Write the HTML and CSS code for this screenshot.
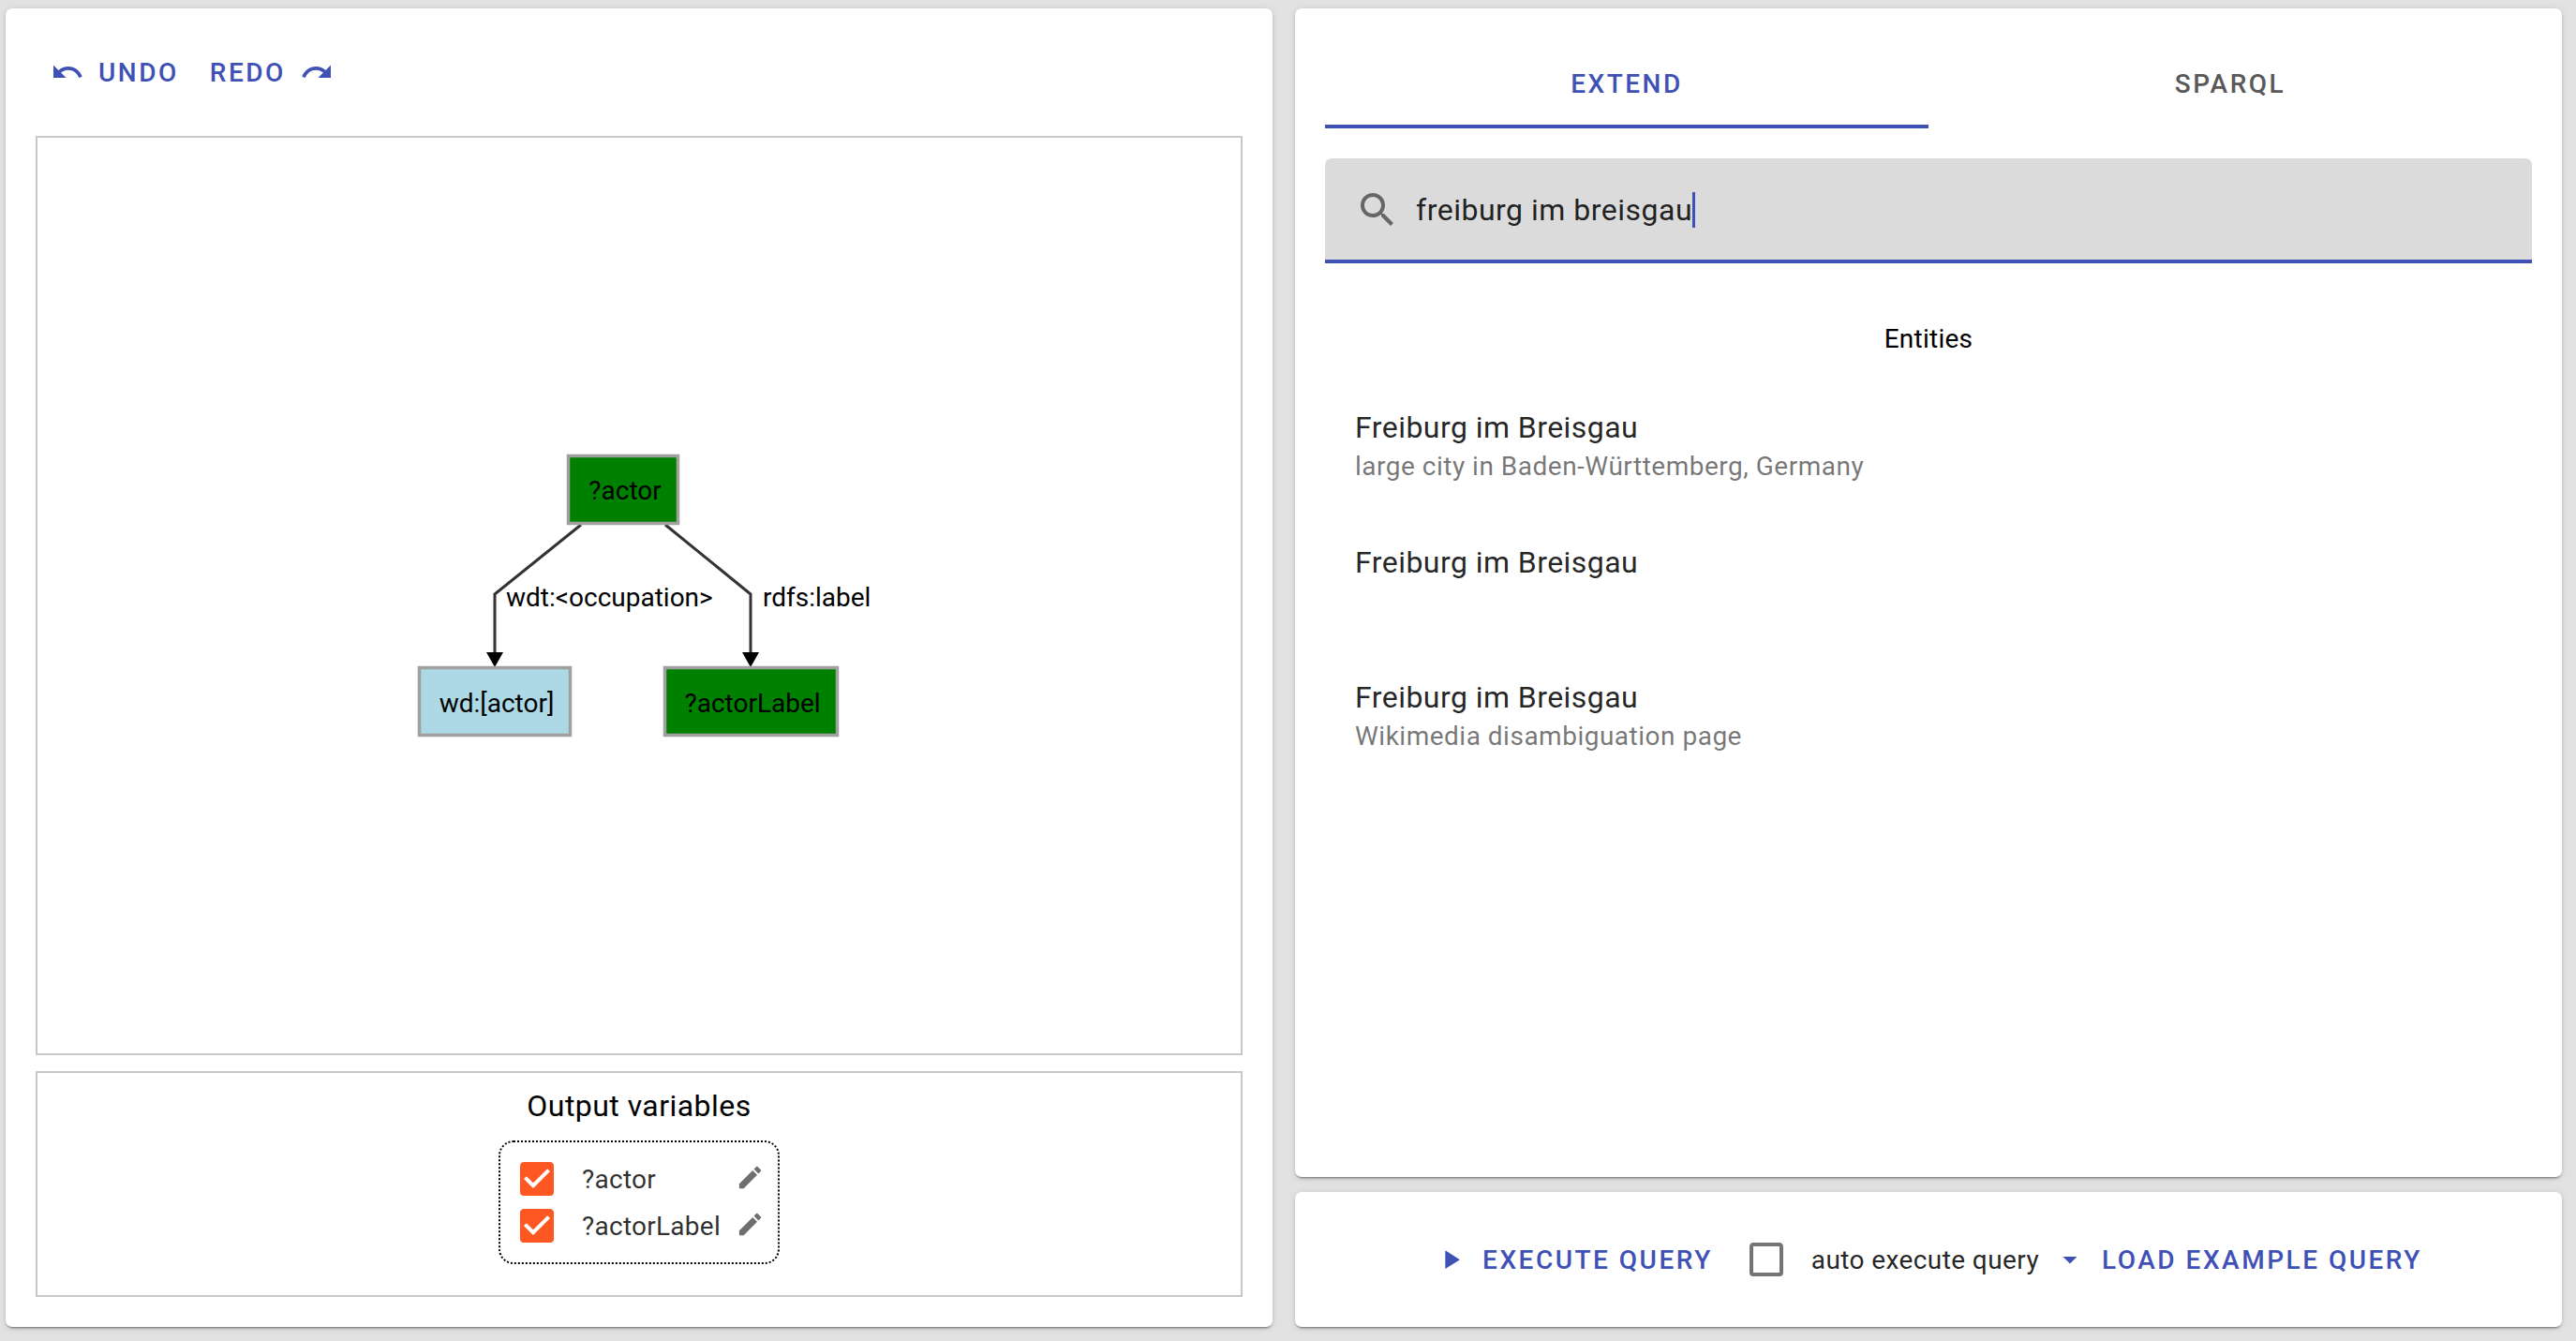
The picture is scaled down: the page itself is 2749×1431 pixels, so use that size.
FILE: index.html
```html
<!DOCTYPE html>
<html lang="en">
<head>
<meta charset="utf-8">
<title>Query builder</title>
<link rel="stylesheet" href="styles.css">
</head>
<body>
<main class="app">
  <section class="card left">
    <div class="history">
      <button class="btn btn-undo"><svg class="ic36" viewBox="0 0 24 24"><path d="M12.5,8C9.85,8 7.45,9 5.6,10.6L2,7V16H11L7.38,12.38C8.77,11.22 10.54,10.5 12.5,10.5C16.04,10.5 19.05,12.81 20.1,16L22.47,15.22C21.08,11.03 17.15,8 12.5,8Z"/></svg>UNDO</button>
      <button class="btn btn-redo"><span>REDO</span><svg class="ic36" viewBox="0 0 24 24"><path d="M18.4,10.6C16.55,9 14.15,8 11.5,8C6.85,8 2.92,11.03 1.54,15.22L3.9,16C4.95,12.81 7.95,10.5 11.5,10.5C13.45,10.5 15.24,11.22 16.63,12.38L13,16H22V7L18.4,10.6Z"/></svg></button>
    </div>
    <div class="graph">
      <svg class="graph-svg" viewBox="40 147 1284 977" preserveAspectRatio="xMinYMin meet">
        <path class="edge" d="M620 560 L528 634 V700"/>
        <path class="edge" d="M710 560 L801 634 V700"/>
        <path class="head" d="M519 696 H537 L528 712 Z"/>
        <path class="head" d="M792 696 H810 L801 712 Z"/>
        <rect class="node var" x="606.5" y="486.5" width="117" height="72"/>
        <rect class="node res" x="447.5" y="712.5" width="161" height="72"/>
        <rect class="node var" x="709.5" y="712.5" width="184" height="72"/>
        <text class="t" x="667" y="533" text-anchor="middle">?actor</text>
        <text class="t" x="530" y="760" text-anchor="middle">wd:[actor]</text>
        <text class="t" x="803" y="760" text-anchor="middle">?actorLabel</text>
        <text class="t" x="540" y="647">wdt:&lt;occupation&gt;</text>
        <text class="t" x="814" y="647">rdfs:label</text>
      </svg>
    </div>
    <div class="output">
      <h2 class="output-title">Output variables</h2>
      <div class="vars">
        <svg class="ic48 orange" viewBox="0 0 24 24"><path d="M10,17L5,12L6.41,10.59L10,14.17L17.59,6.58L19,8M19,3H5C3.89,3 3,3.89 3,5V19A2,2 0 0,0 5,21H19A2,2 0 0,0 21,19V5C21,3.89 20.1,3 19,3Z"/></svg>
        <span class="var-name">?actor</span>
        <svg class="pencil" viewBox="0 0 24 24"><path d="M3 17.25V21h3.75L17.81 9.94l-3.75-3.75L3 17.25zM20.71 7.04c.39-.39.39-1.02 0-1.41l-2.34-2.34c-.39-.39-1.02-.39-1.41 0l-1.83 1.83 3.75 3.75 1.83-1.83z"/></svg>
        <svg class="ic48 orange" viewBox="0 0 24 24"><path d="M10,17L5,12L6.41,10.59L10,14.17L17.59,6.58L19,8M19,3H5C3.89,3 3,3.89 3,5V19A2,2 0 0,0 5,21H19A2,2 0 0,0 21,19V5C21,3.89 20.1,3 19,3Z"/></svg>
        <span class="var-name">?actorLabel</span>
        <svg class="pencil" viewBox="0 0 24 24"><path d="M3 17.25V21h3.75L17.81 9.94l-3.75-3.75L3 17.25zM20.71 7.04c.39-.39.39-1.02 0-1.41l-2.34-2.34c-.39-.39-1.02-.39-1.41 0l-1.83 1.83 3.75 3.75 1.83-1.83z"/></svg>
      </div>
    </div>
  </section>
  <div class="right">
    <section class="card panel">
      <div class="tabs">
        <div class="tab active">EXTEND</div>
        <div class="tab">SPARQL</div>
      </div>
      <div class="field">
        <svg class="ic48 grey" viewBox="0 0 24 24"><path d="M9.5,3A6.5,6.5 0 0,1 16,9.5C16,11.11 15.41,12.59 14.44,13.73L14.71,14H15.5L20.5,19L19,20.5L14,15.5V14.71L13.73,14.44C12.59,15.41 11.11,16 9.5,16A6.5,6.5 0 0,1 3,9.5A6.5,6.5 0 0,1 9.5,3M9.5,5C7,5 5,7 5,9.5C5,12 7,14 9.5,14C12,14 14,12 14,9.5C14,7 12,5 9.5,5Z"/></svg>
        <span class="query">freiburg im breisgau</span><span class="caret"></span>
      </div>
      <h3 class="entities">Entities</h3>
      <ul class="results">
        <li class="result"><div class="r-title">Freiburg im Breisgau</div><div class="r-sub">large city in Baden-Württemberg, Germany</div></li>
        <li class="result"><div class="r-title">Freiburg im Breisgau</div></li>
        <li class="result"><div class="r-title">Freiburg im Breisgau</div><div class="r-sub">Wikimedia disambiguation page</div></li>
      </ul>
    </section>
    <section class="card actions">
      <button class="btn btn-run"><svg class="play" viewBox="0 0 24 24"><path d="M8,5.14V19.14L19,12.14L8,5.14Z"/></svg>EXECUTE QUERY</button>
      <label class="auto"><svg class="ic48 check-grey" viewBox="0 0 24 24"><path d="M19,3H5C3.89,3 3,3.89 3,5V19A2,2 0 0,0 5,21H19A2,2 0 0,0 21,19V5C21,3.89 20.1,3 19,3M19,5V19H5V5H19Z"/></svg><span class="auto-label">auto execute query</span></label>
      <button class="btn btn-load"><svg class="ic36" viewBox="0 0 24 24"><path d="M7,10L12,15L17,10H7Z"/></svg>LOAD EXAMPLE QUERY</button>
    </section>
  </div>
</main>
</body>
</html>
```
FILE: styles.css
```css
* { box-sizing: border-box; }
html, body { margin: 0; height: 100%; }
body {
  background: #e2e2e2;
  font-family: Roboto, "Noto Sans", sans-serif;
  color: rgba(0, 0, 0, .87);
}
.app {
  display: grid;
  grid-template-columns: 1352px 1352px;
  column-gap: 24px;
  height: 1431px;
  padding: 9px 15px 15px 6px;
}
.card {
  background: #fff;
  border-radius: 7px;
  box-shadow: 0 3px 2px -2px rgba(0, 0, 0, .35), 0 2px 3px rgba(0, 0, 0, .14), 0 1px 8px rgba(0, 0, 0, .1);
}
.left {
  display: flex;
  flex-direction: column;
  padding: 0 32px 32px;
}
.history {
  display: flex;
  align-items: center;
  height: 136px;
  flex: none;
  padding-left: 16px;
  gap: 33px;
}
.btn {
  display: inline-flex;
  align-items: center;
  gap: 17px;
  padding: 0;
  border: 0;
  background: none;
  color: #3f51b5;
  font-family: inherit;
  font-size: 28px;
  font-weight: 500;
  letter-spacing: 2.5px;
  white-space: nowrap;
}
.btn svg { fill: currentColor; flex: none; }
.btn-undo { gap: 15px; }
.btn-redo { gap: 15px; }
.btn-run { gap: 17px; }
.btn-load { gap: 16px; }
.ic36 { width: 36px; height: 36px; }
.ic48 { width: 48px; height: 48px; flex: none; }
.play { width: 34px; height: 34px; }
.orange { fill: #ff5722; }
.grey { fill: #666; }
.check-grey { fill: #757575; }
.graph {
  flex: 1;
  min-height: 0;
  border: 2px solid #c8c8c8;
}
.graph-svg { display: block; width: 100%; height: 100%; }
.edge { fill: none; stroke: #333; stroke-width: 3; }
.head { fill: #000; }
.node { stroke: #a0a0a0; stroke-width: 3.5; }
.var { fill: #008000; }
.res { fill: #add8e6; }
.t { font-family: Roboto, sans-serif; font-size: 28px; fill: #000; }
.output {
  flex: none;
  height: 241px;
  margin-top: 17px;
  border: 2px solid #c8c8c8;
  display: flex;
  flex-direction: column;
  align-items: center;
  padding-top: 15px;
}
.output-title {
  margin: 0;
  font-size: 32px;
  letter-spacing: .45px;
  font-weight: 400;
  line-height: 40px;
  color: #000;
}
.vars {
  margin-top: 17px;
  display: grid;
  grid-template-columns: 48px auto 31px;
  grid-auto-rows: 50px;
  align-items: center;
  padding: 14px 14px 14px 15px;
  border: 2px dotted #000;
  border-radius: 16px;
}
.var-name {
  font-size: 28px;
  letter-spacing: .25px;
  padding: 0 16px 0 24px;
  color: rgba(0, 0, 0, .82);
}
.pencil { width: 31px; height: 31px; fill: #6e6e6e; margin-top: -4px; }
.right {
  display: flex;
  flex-direction: column;
  gap: 16px;
  min-height: 0;
}
.panel {
  flex: 1;
  padding: 34px 32px 0;
  min-height: 0;
}
.tabs { display: grid; grid-template-columns: 1fr 1fr; }
.tab {
  height: 94px;
  padding-top: 3px;
  border-bottom: 4px solid transparent;
  display: flex;
  align-items: center;
  justify-content: center;
  font-size: 28px;
  font-weight: 500;
  letter-spacing: 2.5px;
  color: #595959;
}
.tab.active { color: #3f51b5; border-bottom-color: #3f51b5; }
.field {
  margin-top: 32px;
  height: 112px;
  padding: 2px 32px 0;
  display: flex;
  align-items: center;
  background: #dbdbdb;
  border-bottom: 4px solid #3f51b5;
  border-radius: 7px 7px 0 0;
}
.query {
  margin-left: 17px;
  font-size: 32px;
  letter-spacing: .5px;
}
.caret { width: 3px; height: 38px; background: #3f51b5; }
.entities {
  margin: 61px 0 0;
  text-align: center;
  font-size: 28px;
  letter-spacing: .25px;
  font-weight: 400;
  line-height: 40px;
  color: #000;
}
.results { list-style: none; margin: 36px 0 0; padding: 0; }
.result { height: 144px; padding: 18px 0 0 32px; }
.r-title { font-size: 32px; line-height: 40px; letter-spacing: .45px; }
.r-sub { margin-top: 4px; font-size: 28px; line-height: 36px; letter-spacing: .5px; color: rgba(0, 0, 0, .55); }
.actions {
  flex: none;
  height: 144px;
  display: flex;
  align-items: center;
  justify-content: center;
  gap: 33px;
}
.auto { display: flex; align-items: center; gap: 24px; margin-right: -18px; }
.auto-label { font-size: 28px; letter-spacing: .4px; }
```
